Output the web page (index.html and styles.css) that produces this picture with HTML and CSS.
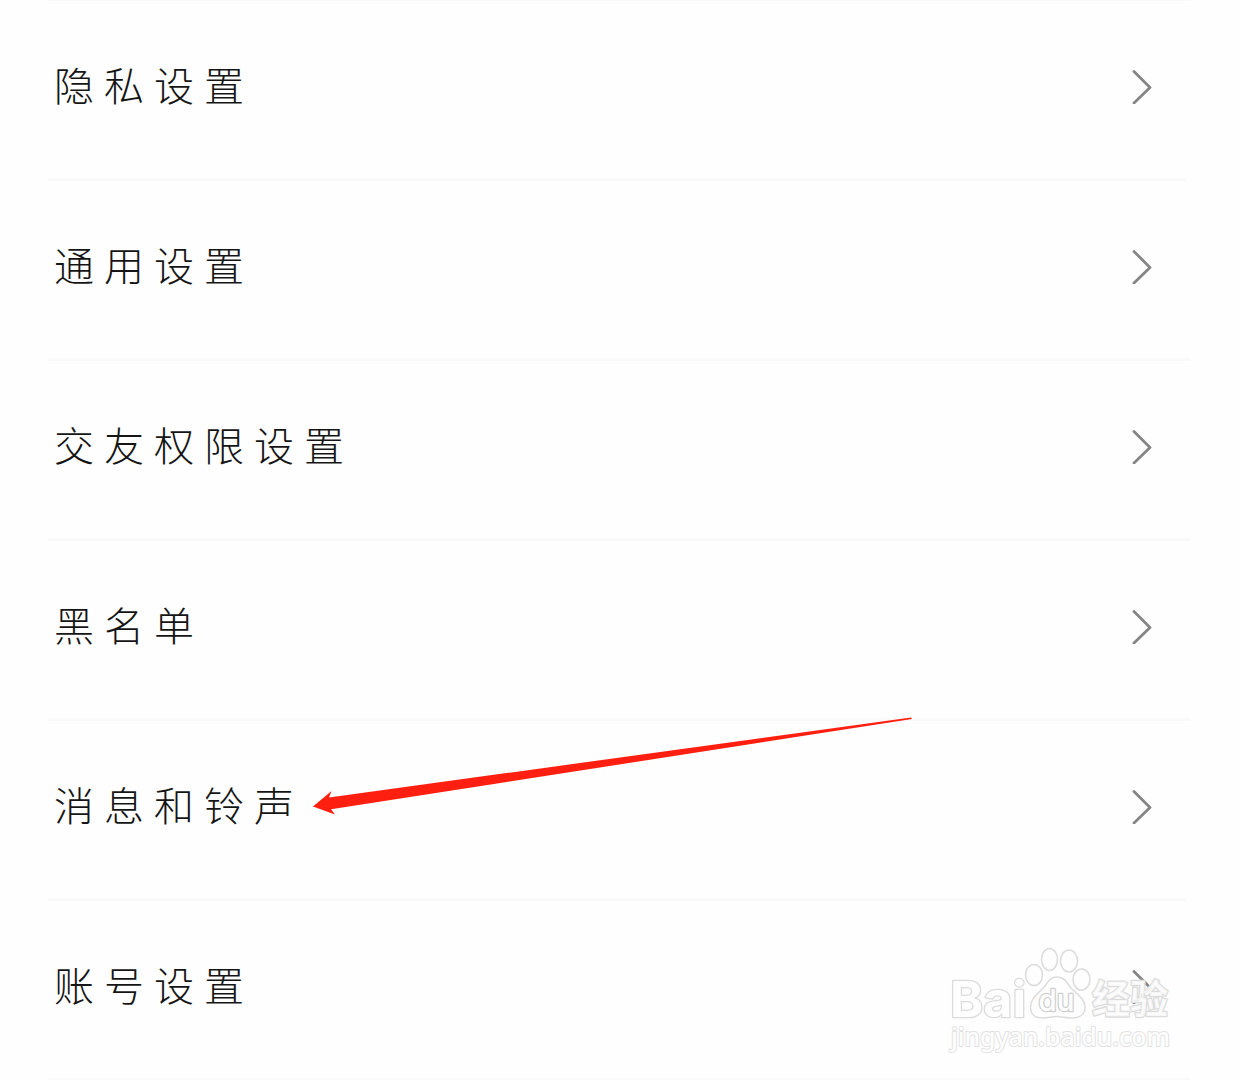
FILE: index.html
```html
<!DOCTYPE html>
<html lang="zh-CN">
<head>
    <meta charset="UTF-8">
    <meta name="viewport" content="width=device-width, initial-scale=1.0">
    <title>设置</title>
    <link rel="stylesheet" href="styles.css">
</head>
<body>
    <main class="settings">
        <div class="row short">
            <span class="label">隐私设置</span>
            <svg class="chevron" viewBox="0 0 20 34"><path d="M2 1.5 L18 17.500 L2 33"/></svg>
        </div>
        <div class="row">
            <span class="label">通用设置</span>
            <svg class="chevron" viewBox="0 0 20 34"><path d="M2 1.5 L18 17.500 L2 33"/></svg>
        </div>
        <div class="row">
            <span class="label">交友权限设置</span>
            <svg class="chevron" viewBox="0 0 20 34"><path d="M2 1.5 L18 17.500 L2 33"/></svg>
        </div>
        <div class="row">
            <span class="label">黑名单</span>
            <svg class="chevron" viewBox="0 0 20 34"><path d="M2 1.5 L18 17.500 L2 33"/></svg>
        </div>
        <div class="row short">
            <span class="label">消息和铃声</span>
            <svg class="chevron" viewBox="0 0 20 34"><path d="M2 1.5 L18 17.500 L2 33"/></svg>
        </div>
        <div class="row">
            <span class="label">账号设置</span>
            <svg class="chevron" viewBox="0 0 20 34"><path d="M2 1.5 L18 17.500 L2 33"/></svg>
        </div>
    </main>

    <!-- Arrow pointing at 消息和铃声 -->
    <svg class="arrow" viewBox="310 714 606 104">
        <path d="M313 806.5 L331.5 791 L329 797.5 L911 717.5 L912 719 L331 809.3 L335 814.5 Z"/>
    </svg>

    <!-- Watermark -->
    <svg class="watermark" viewBox="940 940 240 120">
        <g class="logo">
            <text class="bai" x="950" y="1016.5" textLength="76" lengthAdjust="spacingAndGlyphs">Bai</text>
            <ellipse cx="1034" cy="975" rx="8.5" ry="10.5"/>
            <ellipse cx="1049.5" cy="959.5" rx="8" ry="11"/>
            <ellipse cx="1069" cy="961" rx="8.5" ry="11"/>
            <ellipse cx="1081.5" cy="979.5" rx="8.5" ry="10.5"/>
            <path d="M1057 977 C1064 977 1067 982 1070 987 C1075 993 1085 998 1085 1007 C1085 1015 1079 1018 1072 1018 C1066 1018 1062 1016.5 1057 1016.5 C1052 1016.5 1048 1018 1042 1018 C1035 1018 1030.5 1014 1030.5 1007 C1030.5 998 1039 993 1044 987 C1048 982 1050 977 1057 977 Z"/>
            <text class="du" x="1038.5" y="1010.5" textLength="36" lengthAdjust="spacingAndGlyphs">du</text>
            <text class="jingyan" x="1092" y="1013" textLength="76" lengthAdjust="spacingAndGlyphs">经验</text>
        </g>
        <text class="url" x="951" y="1046" textLength="219" lengthAdjust="spacingAndGlyphs">jingyan.baidu.com</text>
    </svg>
</body>
</html>
```
FILE: styles.css
```css
body {
    margin: 0;
    background-color: #fefefe;
    color: #151515;
    font-family: "Noto Sans CJK SC", sans-serif;
    overflow: hidden;
}
.settings {
    margin: 0 48px 0 48px;
    border-top: 1px solid #f9f9f9;
}
.row {
    display: flex;
    align-items: center;
    justify-content: space-between;
    box-sizing: border-box;
    height: 180px;
    padding: 0 39px 5px 6px;
    border-bottom: 3px solid #f9f9f9;
}
.row.short {
    margin-right: 6px;
    padding-right: 33px;
}
.label {
    padding-bottom: 6px;
    font-size: 40px;
    font-weight: 300;
    line-height: 60px;
    letter-spacing: 10px;
}
.chevron {
    width: 20px;
    height: 34px;
    fill: none;
    stroke: #858585;
    stroke-width: 2.8;
    stroke-linecap: round;
    stroke-linejoin: round;
}
.arrow {
    position: absolute;
    left: 310px;
    top: 714px;
    width: 606px;
    height: 104px;
    fill: #ff1f10;
}
.watermark {
    position: absolute;
    left: 940px;
    top: 940px;
    width: 240px;
    height: 120px;
    fill: #fefefe;
    stroke: #dcdcdc;
    stroke-width: 1.5;
}
.watermark text {
    paint-order: stroke;
    stroke-width: 2.6;
    stroke-linejoin: round;
}
.bai {
    font-family: Inter, sans-serif;
    font-size: 49px;
    font-weight: 700;
}
.du {
    font-family: Inter, sans-serif;
    font-size: 30px;
    font-weight: 500;
}
.watermark .du {
    stroke: #cfcfcf;
}
.jingyan {
    font-size: 39px;
    font-weight: 700;
    fill-opacity: 0.8;
}
.watermark .url {
    font-family: "Noto Sans", sans-serif;
    font-size: 26px;
    font-weight: 500;
    stroke: #e2e2e2;
    stroke-width: 2;
}
```
